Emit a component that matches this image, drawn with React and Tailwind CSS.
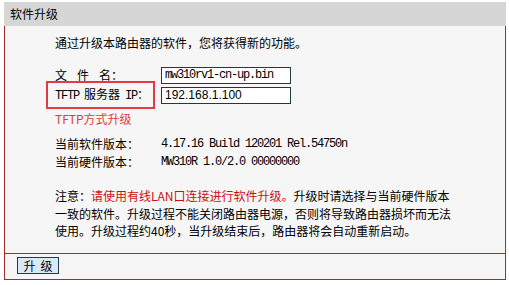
const cjk = { fontFamily: '"Noto Sans CJK SC", "Noto Sans", sans-serif' };
const mono = { fontFamily: '"Liberation Mono", "DejaVu Sans Mono", monospace' };

const Mono = ({ children }) => (
  <span className="text-[12px] tracking-[-1.2px]" style={mono}>
    {children}
  </span>
);

const App = () => {
  return (
    <div className="w-[509px] h-[285px] bg-white pt-[2px] pl-[4px] text-[12px] text-black" style={cjk}>
      <div className="w-[502px]">
        <div className="h-[24px] bg-[#d6d6d6] pl-[6px] leading-[24px]">软件升级</div>

        <div className="bg-[#f6f6f6] border-x border-b border-[#a52a2d] pl-[50px] pt-[8px] pb-[13px]">
          <div className="h-[18px] leading-[18px]">通过升级本路由器的软件，您将获得新的功能。</div>

          <div className="mt-[13px] flex h-[20px] items-center">
            <div className="w-[106px]">
              <span className="tracking-[10px]">文件</span>名：
            </div>
            <input
              readOnly
              value="mw310rv1-cn-up.bin"
              className="w-[130px] h-[17px] border border-[#1f3a3a] bg-white px-[3px] text-[12px] tracking-[-1.2px] outline-none"
              style={mono}
            />
          </div>

          <div className="flex h-[20px] items-center">
            <div className="w-[106px]">
              <span className="relative inline-block">
                <Mono>TFTP</Mono>
                <span className="mx-[5px]">服务器</span>
                <Mono>IP</Mono>：
                <span className="absolute left-[-9px] right-[-6px] top-[-4px] bottom-[-4px] border-2 border-[#e23c40]" />
              </span>
            </div>
            <input
              readOnly
              value="192.168.1.100"
              className="w-[130px] h-[17px] border border-[#1f3a3a] bg-white px-[3px] text-[12px] outline-none"
              style={{ fontFamily: '"Liberation Sans", Arial, sans-serif' }}
            />
          </div>

          <div className="mt-[5px] h-[18px] leading-[18px] text-[#e0393e]">TFTP方式升级</div>

          <div className="mt-[7px] flex h-[18px] items-center">
            <div className="w-[106px]">当前软件版本：</div>
            <Mono>4.17.16 Build 120201 Rel.54750n</Mono>
          </div>
          <div className="flex h-[18px] items-center">
            <div className="w-[106px]">当前硬件版本：</div>
            <Mono>MW310R 1.0/2.0 00000000</Mono>
          </div>

          <div className="mt-[16px] leading-[17.5px]">
            注意：<span className="text-[#cc1010]">请使用有线LAN口连接进行软件升级。</span>升级时请选择与当前硬件版本
            <br />
            一致的软件。升级过程不能关闭路由器电源，否则将导致路由器损坏而无法
            <br />
            使用。升级过程约40秒，当升级结束后，路由器将会自动重新启动。
          </div>
        </div>

        <div className="h-[26px] bg-[#f6f6f6] border-x border-b border-[#a52a2d] pl-[12px] pt-[3px]">
          <button
            type="button"
            className="w-[42px] h-[17px] border border-[#1f3a4a] bg-[#d9e9f9] text-[12px] leading-[15px] tracking-[5px] pl-[5px]"
            style={cjk}
          >
            升级
          </button>
        </div>
      </div>
    </div>
  );
};

export default App;
